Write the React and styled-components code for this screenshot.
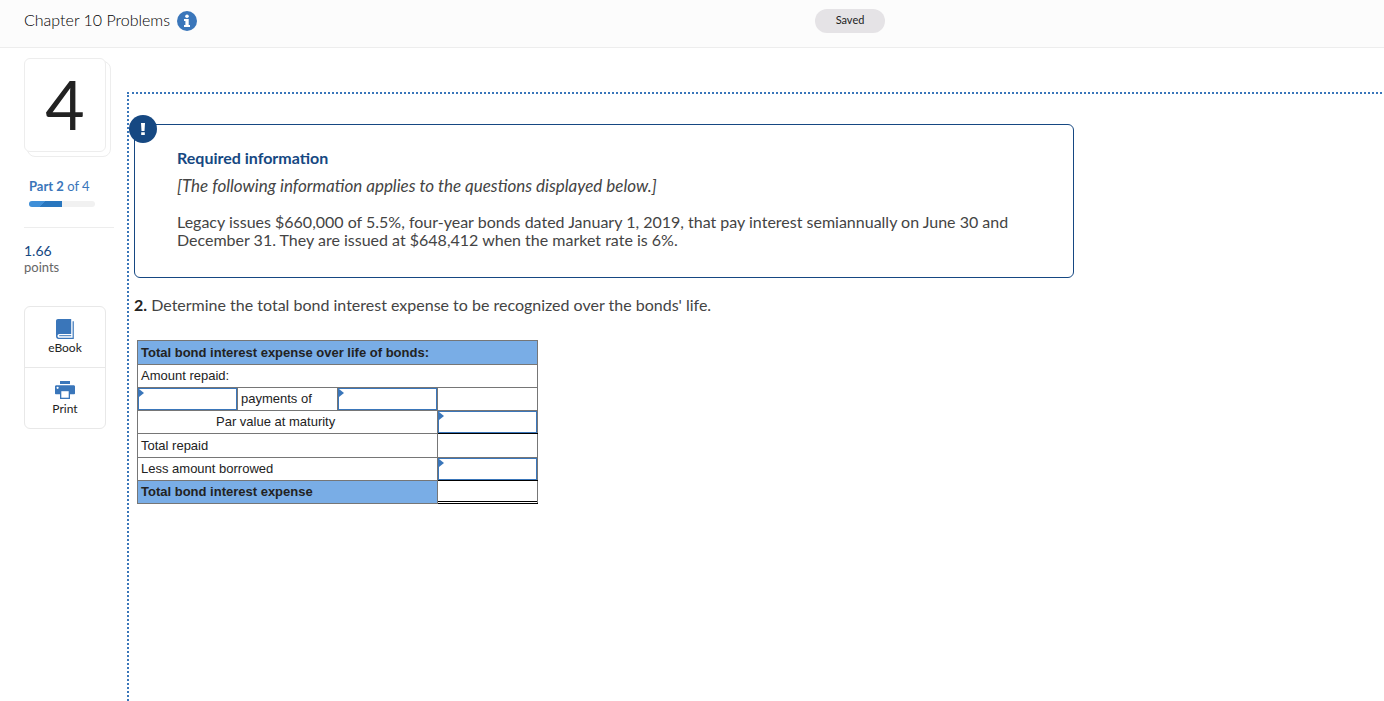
import React from "react";
import { styled, createGlobalStyle } from "styled-components";

function App() {
  return (
    <Page>
      <GlobalStyle />
      <Header>
        <Heading>
          <Title>Chapter 10 Problems</Title>
          <InfoButton aria-label="Assignment information">
            <InfoIcon />
          </InfoButton>
        </Heading>
        <Saved>Saved</Saved>
      </Header>
      <Main>
        <Sidebar>
          <QuestionCard>4</QuestionCard>
          <Part>
            <PartLabel>
              <b>Part 2</b> of 4
            </PartLabel>
            <Progress>
              <ProgressFill />
            </Progress>
          </Part>
          <Points>
            <PointsValue>1.66</PointsValue>
            <PointsLabel>points</PointsLabel>
          </Points>
          <Tools>
            <ToolButton>
              <BookIcon />
              eBook
            </ToolButton>
            <ToolButton>
              <PrintIcon />
              Print
            </ToolButton>
          </Tools>
        </Sidebar>
        <Content>
          <Required>
            <Badge>
              <ExclamationIcon />
            </Badge>
            <RequiredTitle>Required information</RequiredTitle>
            <Note>
              [The following information applies to the questions displayed
              below.]
            </Note>
            <Description>
              Legacy issues $660,000 of 5.5%, four-year bonds dated January 1,
              2019, that pay interest semiannually on June 30 and December 31.
              They are issued at $648,412 when the market rate is 6%.
            </Description>
          </Required>
          <Question>
            <b>2.</b> Determine the total bond interest expense to be recognized
            over the bonds' life.
          </Question>
          <Worksheet>
            <colgroup>
              <col />
              <col />
              <col />
              <col />
            </colgroup>
            <tbody>
              <tr>
                <HeadCell colSpan={4} $tall>
                  Total bond interest expense over life of bonds:
                </HeadCell>
              </tr>
              <tr>
                <Cell colSpan={4}>Amount repaid:</Cell>
              </tr>
              <tr>
                <EntryCell label="Number of payments" />
                <Cell>payments of</Cell>
                <EntryCell label="Payment amount" />
                <Cell />
              </tr>
              <tr>
                <Cell colSpan={3} $indent>
                  Par value at maturity
                </Cell>
                <EntryCell label="Par value at maturity" $underline />
              </tr>
              <tr>
                <Cell colSpan={3} $tall>
                  Total repaid
                </Cell>
                <Cell />
              </tr>
              <tr>
                <Cell colSpan={3}>Less amount borrowed</Cell>
                <EntryCell label="Less amount borrowed" $underline />
              </tr>
              <tr>
                <HeadCell colSpan={3}>Total bond interest expense</HeadCell>
                <TotalCell $underline />
              </tr>
            </tbody>
          </Worksheet>
        </Content>
      </Main>
    </Page>
  );
}

function EntryCell({ label, $underline }) {
  return (
    <InputCell $underline={$underline}>
      <Entry type="text" aria-label={label} />
    </InputCell>
  );
}

function InfoIcon() {
  return (
    <svg width="20" height="20" viewBox="0 0 20 20">
      <circle cx="10" cy="10" r="10" fill="#3a76ba" />
      <circle cx="10" cy="5.2" r="1.8" fill="#fff" />
      <path d="M7 8h4.7v6.1H13V16H7v-1.900h1.400V9.900H7z" fill="#fff" />
    </svg>
  );
}

function ExclamationIcon() {
  return (
    <svg width="6" height="14" viewBox="0 0 6 14">
      <path d="M1 1h4l-.5 8h-3zM1.2 10.3h3.6V13H1.2z" fill="#fff" />
    </svg>
  );
}

function BookIcon() {
  return (
    <svg width="18" height="20" viewBox="0 0 18 20">
      <path
        d="M2 0h13.2v15H3.4c-1.1 0-1.9.8-1.9 1.9 0 1 .8 1.8 1.9 1.8h13.2V2.2h1.2V20H2.6C1 20 0 18.8 0 17.3V2C0 .8.8 0 2 0z"
        fill="#3a76ba"
      />
      <path d="M3.2 16.2h12v1h-12z" fill="#3a76ba" />
    </svg>
  );
}

function PrintIcon() {
  return (
    <svg width="20" height="20" viewBox="0 -1 20 20">
      <path d="M5 0h10v3H5z" fill="#3a76ba" />
      <path
        d="M1.4 4.2h17.2c.8 0 1.4.6 1.4 1.4v6.800c0 .5-.4.8-.8.8H15V18H5v-4.800H.8c-.5 0-.8-.4-.8-.8V5.600c0-.8.6-1.400 1.400-1.400z"
        fill="#3a76ba"
      />
      <path d="M6.300 10.200h7.400v6.500H6.300z" fill="#fff" />
      <circle cx="2.600" cy="6.800" r="1.100" fill="#fff" />
    </svg>
  );
}

export default App;

const GlobalStyle = createGlobalStyle`
  * {
    box-sizing: border-box;
  }

  body {
    margin: 0;
    background: #fff;
    color: #222;
    font-family: Lato, "Open Sans", sans-serif;
    font-size: 16px;
  }

  button {
    border: none;
    padding: 0;
    background: none;
    font-family: inherit;
    color: inherit;
    cursor: pointer;
  }

  svg {
    display: block;
  }
`;

const Page = styled.div`
  min-height: 100vh;
  display: flex;
  flex-direction: column;
`;

const Header = styled.header`
  height: 48px;
  padding: 9px 0 0 24px;
  display: grid;
  grid-template-columns: 1fr 569px;
  align-items: start;
  background: #fcfcfc;
  border-bottom: 1px solid #ededed;
`;

const Heading = styled.div`
  display: flex;
  align-items: center;
  gap: 7px;
  height: 24px;
`;

const Title = styled.h1`
  margin: 0;
  padding-bottom: 2px;
  font-size: 16px;
  font-weight: 300;
  line-height: 20px;
  color: #000;
`;

const InfoButton = styled.button`
  width: 20px;
  height: 20px;
`;

const Saved = styled.div`
  width: 70px;
  height: 24px;
  border-radius: 12px;
  background: #e5e3e6;
  font-size: 11px;
  line-height: 22px;
  text-align: center;
`;

const Main = styled.main`
  flex: 1;
  display: flex;
`;

const Sidebar = styled.aside`
  flex: 0 0 127px;
  padding: 10px 13px 0 24px;
  isolation: isolate;
`;

const QuestionCard = styled.div`
  position: relative;
  width: 82px;
  height: 94px;
  border: 1px solid #ededed;
  border-radius: 6px;
  background: #fff;
  font-size: 68px;
  line-height: 90px;
  text-align: center;

  &::after {
    content: "";
    position: absolute;
    z-index: -1;
    inset: 2px -6px -6px 2px;
    border: 1px solid #ededed;
    border-radius: 8px;
  }
`;

const Part = styled.div`
  margin-top: 26px;
  padding: 0 0 20px 5px;
  border-bottom: 1px solid #ededed;
`;

const PartLabel = styled.div`
  font-size: 13px;
  line-height: 17px;
  color: #3a76ba;
`;

const Progress = styled.div`
  width: 66px;
  height: 6px;
  margin-top: 6px;
  border-radius: 3px;
  background: #f1f1f1;
  overflow: hidden;
`;

const ProgressFill = styled.div`
  width: 50%;
  height: 100%;
  background: linear-gradient(135deg, #3f8fd8 42%, #2876be 42%);
`;

const Points = styled.div`
  padding-top: 14px;
`;

const PointsValue = styled.div`
  font-size: 14px;
  line-height: 18px;
  color: #164882;
`;

const PointsLabel = styled.div`
  font-size: 13px;
  line-height: 14px;
  color: #666;
`;

const Tools = styled.div`
  width: 82px;
  margin-top: 32px;
  border: 1px solid #e8e8e8;
  border-radius: 6px;
`;

const ToolButton = styled.button`
  width: 100%;
  height: 60px;
  padding-top: 12px;
  display: flex;
  flex-direction: column;
  align-items: center;
  gap: 1px;
  font-size: 12px;
  line-height: 16px;

  & + & {
    height: 61px;
    border-top: 1px solid #e8e8e8;
  }
`;

const Content = styled.section`
  flex: 1;
  margin: 44px 2px 0 0;
  padding: 30px 5px;
  border-top: 2px dotted #3a76ba;
  border-left: 2px dotted #3a76ba;
`;

const Required = styled.div`
  position: relative;
  max-width: 940px;
  padding: 23px 42px 28px;
  border: 1px solid #164882;
  border-radius: 6px;
`;

const Badge = styled.span`
  position: absolute;
  top: -10px;
  left: -6px;
  width: 28px;
  height: 28px;
  display: flex;
  align-items: center;
  justify-content: center;
  border-radius: 50%;
  background: #164882;
`;

const RequiredTitle = styled.h2`
  margin: 0;
  font-size: 16px;
  line-height: 20px;
  color: #164882;
`;

const Note = styled.p`
  margin: 8px 0 0;
  font-size: 17px;
  font-style: italic;
  line-height: 20px;
  color: #444;
`;

const Description = styled.p`
  margin: 17px 0 0;
  line-height: 18px;
  color: #444;
`;

const Question = styled.p`
  margin: 17px 0 0;
  line-height: 20px;
  color: #444;

  b {
    color: #222;
  }
`;

const Worksheet = styled.table`
  width: 401px;
  margin: 25px 0 0 3px;
  border-collapse: collapse;
  table-layout: fixed;
  font-family: "Liberation Sans", Arial, sans-serif;
  font-size: 13px;
  line-height: 16px;
`;

const Cell = styled.td`
  height: ${(props) => (props.$tall ? "24px" : "23px")};
  padding: 0 3px 0 ${(props) => (props.$indent ? "78px" : "3px")};
  border: 1px solid #767676;
  ${(props) => props.$underline && "border-bottom: 1px solid #000;"}
`;

const HeadCell = styled.th`
  height: ${(props) => (props.$tall ? "24px" : "23px")};
  padding: 0 3px;
  border: 1px solid #767676;
  background: #79ade6;
  text-align: left;
`;

const TotalCell = styled(Cell)`
  box-shadow: inset 0 -1px #fff, inset 0 -2px #000;
`;

const InputCell = styled(Cell)`
  position: relative;
  padding: 0;

  &::before {
    content: "";
    position: absolute;
    top: 1px;
    left: 1px;
    border: 4px solid transparent;
    border-left: 5px solid #3a76ba;
    border-right: none;
  }
`;

const Entry = styled.input`
  display: block;
  width: 100%;
  height: 22px;
  padding: 0 6px;
  border: 1px solid #3a76ba;
  border-radius: 0;
  background: #fff;
  font: inherit;
`;
